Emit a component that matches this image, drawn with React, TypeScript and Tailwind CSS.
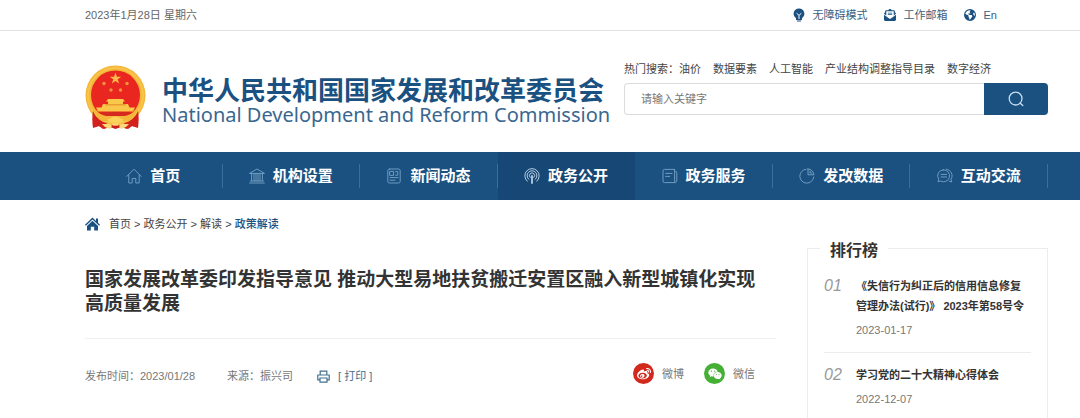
import type { ReactNode } from "react";
import clsx from "clsx";
import { FaEarthAmericas, FaEnvelopeOpenText, FaWeibo, FaWeixin } from "react-icons/fa6";

const hotWords = ["油价", "数据要素", "人工智能", "产业结构调整指导目录", "数字经济"];

const ranking = [
  { no: "01", title: "《失信行为纠正后的信用信息修复管理办法(试行)》 2023年第58号令", date: "2023-01-17" },
  { no: "02", title: "学习党的二十大精神心得体会", date: "2022-12-07" },
];

function LineIcon({ children }: { children: ReactNode }) {
  return (
    <svg viewBox="0 0 16 16" className="h-4 w-4 shrink-0" fill="none" stroke="currentColor" strokeWidth="1" strokeLinecap="round" strokeLinejoin="round" aria-hidden="true">
      {children}
    </svg>
  );
}

const navItems = [
  {
    label: "首页",
    icon: <path d="M.8 8.4 8 1.2l7.2 7.2M2.8 7v8h3.4v-4.6h3.6V15h3.4V7" />,
  },
  {
    label: "机构设置",
    icon: <path d="M.8 5.2 8 1l7.2 4.2zM2.6 5.4v7.4M5 5.4v7.4M7 5.4v7.4M9 5.4v7.4M11 5.4v7.4M13.4 5.4v7.4M1.6 13h12.8M.6 15h14.8" />,
  },
  {
    label: "新闻动态",
    icon: (
      <>
        <rect x="1.8" y="1" width="12.4" height="14" rx="1.6" />
        <rect x="4" y="3.4" width="3.6" height="4" />
        <path d="M9.6 3.6h2.2v3.6H9.6M4 9.6h8M4 12.2h5" />
      </>
    ),
  },
  {
    label: "政务公开",
    active: true,
    icon: (
      <>
        <path d="M3.2 13.2a7.2 7.2 0 1 1 9.6 0M4.6 11.2a4.9 4.9 0 1 1 6.8 0M6.2 9.4a2.6 2.6 0 1 1 3.6 0" />
        <path d="M8 8v7" strokeWidth="1.8" />
      </>
    ),
  },
  {
    label: "政务服务",
    icon: (
      <>
        <path d="M12.6 1.4H2.4A1.4 1.4 0 0 0 1 2.8v10.4a1.4 1.4 0 0 0 1.4 1.4h10.8M12.6 1.4v11.8M12.6 3.4h.9a1.3 1.3 0 0 1 1.3 1.3v8.5a1.4 1.4 0 0 1-2.2.8" />
        <path d="M3.6 5.4h6.4M3.6 8.4h4" />
      </>
    ),
  },
  {
    label: "发改数据",
    icon: (
      <>
        <path d="M7 1.2a7 7 0 1 0 7.8 7.8" />
        <path d="M9 .9v5.9h6A6.4 6.4 0 0 0 9 .9z" />
        <path d="M11 3v2h2" />
      </>
    ),
  },
  {
    label: "互动交流",
    icon: (
      <>
        <path d="M6.6 1.8a6 6 0 1 1-3 11.2L1 13.8l.7-2.6a6 6 0 0 1 4.9-9.4z" />
        <path d="M4 6.4h5.6M4 9h5.6M9.4 1.2a6.4 6.4 0 0 1 4.6 10l.8 2.8-2.6-.8" />
      </>
    ),
  },
];

function Emblem() {
  return (
    <svg viewBox="0 0 61 65" className="h-[65px] w-[61px] shrink-0" role="img" aria-label="国徽">
      <path d="M8 48h45v14l-6-1-5 3-6-2-5.500 2-5.500-2-6 2-5-3-6 1z" fill="#c91f1c" />
      <circle cx="30.500" cy="30.500" r="30" fill="#f4b73a" />
      <circle cx="30.500" cy="30.500" r="27.500" fill="none" stroke="#f8c44a" strokeWidth="2" />
      <circle cx="30.500" cy="30" r="24.500" fill="#e9261f" />
      <path d="m30.500 7.500 1.400 4.200h4.400l-3.600 2.600 1.400 4.200-3.600-2.600-3.600 2.600 1.400-4.200-3.600-2.600h4.400z" fill="#fcb94b" />
      <g fill="#f8903c">
        <circle cx="19" cy="18.500" r="1.700" />
        <circle cx="42" cy="18.500" r="1.700" />
        <circle cx="26" cy="25" r="1.700" />
        <circle cx="35.500" cy="25" r="1.700" />
      </g>
      <path d="M23 34h15l2 2.500h-2V39h5l1.500 3.500H50l-2 4H13l-2-4h5.500L18 39h5v-2.500h-2z" fill="#f9c749" />
      <path d="M20 39.800h21" stroke="#e58a2b" strokeWidth="1" />
      <path d="M10 47c5 1 8 4 12 4 3 0 5-2 8.500-2s5.500 2 8.500 2c4 0 7-3 12-4l-5 9H15z" fill="#f4b73a" />
      <path d="M14 48.500c5 .5 7 2.500 10 2.500h13c3 0 5-2 10-2.500l-4-1.500H18z" fill="#d42a20" />
      <path d="M8 46c-1 6-.8 11 0 17l6-2 4 3 4-6c-6-1-11-5-14-12zM53 46c1 6 .8 11 0 17l-6-2-4 3-4-6c6-1 11-5 14-12z" fill="#d3221d" />
      <path d="M22 54.500c4 0 4-3 8.500-3s4.500 3 8.500 3l-3 3H25z" fill="#fbd45c" />
      <path d="M17 59h8l2 2-2 3-5-2zM44 59h-8l-2 2 2 3 5-2zM27 58.500h7l-1 2h-5z" fill="#fbd97c" />
    </svg>
  );
}

function TopBar() {
  return (
    <div className="border-b border-[#dfe3e6]">
      <div className="flex h-[30px] items-center justify-between pr-[83px] pl-[85px] text-[#666]">
        <time dateTime="2023-01-28">2023年1月28日 星期六</time>
        <div className="flex items-center gap-4 text-[#3c5f80]">
          <a href="#accessible" className="flex items-center gap-2">
            <svg viewBox="0 0 12 14" className="h-3.5 w-3 text-[#1b5180]" aria-hidden="true">
              <path d="M6 .5a5.300 5.300 0 0 0-3 9.700V12h6v-1.800A5.300 5.300 0 0 0 6 .5zM4 12.600h4v.9H4z" fill="currentColor" />
              <path d="M3.600 5.200 6 7.400l2.400-2.200M6 7.400V11" fill="none" stroke="#fff" strokeWidth="1" />
            </svg>
            无障碍模式
          </a>
          <a href="#mail" className="flex items-center gap-2">
            <FaEnvelopeOpenText className="h-3 w-3 text-[#1b5180]" />
            工作邮箱
          </a>
          <a href="#en" className="flex items-center gap-2">
            <FaEarthAmericas className="h-3 w-3 text-[#1b5180]" />
            En
          </a>
        </div>
      </div>
    </div>
  );
}

function Header() {
  return (
    <header className="flex items-start justify-between pt-[30px] pr-8 pb-[22px] pl-[85px]">
      <a href="#home" className="flex gap-4 pt-1 whitespace-nowrap text-[#1b5180]">
        <Emblem />
        <span className="flex flex-col pt-3">
          <span className="text-[26px] leading-7 font-bold">中华人民共和国国家发展和改革委员会</span>
          <span className="font-['Noto_Sans'] text-[20px] leading-5 text-[#3a678f]">National Development and Reform Commission</span>
        </span>
      </a>
      <div className="flex w-[424px] flex-col gap-1.5">
        <div className="flex gap-3 leading-4 text-[#444]">
          <p className="flex">
            热门搜索：<a href="#hot">{hotWords[0]}</a>
          </p>
          {hotWords.slice(1).map((word) => (
            <a key={word} href="#hot">{word}</a>
          ))}
        </div>
        <form className="flex h-8" role="search">
          <input
            type="text"
            aria-label="搜索"
            placeholder="请输入关键字"
            className="min-w-0 flex-1 rounded-l border border-r-0 border-[#dcdcdc] px-4 placeholder:text-[#777]"
          />
          <button type="button" aria-label="搜索" className="flex w-16 items-center justify-center rounded-r bg-[#1b5180] text-[#c6e0f2]">
            <LineIcon>
              <circle cx="7.600" cy="7.600" r="6.400" strokeWidth="1.300" />
              <path d="m12.200 12.200 2.600 2.400" strokeWidth="1.300" />
            </LineIcon>
          </button>
        </form>
      </div>
    </header>
  );
}

function MainNav() {
  return (
    <nav className="bg-[#1b5180] pr-8 pl-[85px]">
      <ul className="flex h-12">
        {navItems.map((item) => (
          <li key={item.label} className={clsx("flex flex-1 items-center", item.active && "bg-[#174775]")}>
            <a href="#nav" className="flex flex-1 items-center justify-center gap-2 text-[15px] leading-6 font-bold text-white">
              <span className={item.active ? "text-[#b5cfe4]" : "text-[#6f9cc0]"}>
                <LineIcon>{item.icon}</LineIcon>
              </span>
              {item.label}
            </a>
            <span className={clsx("h-6 w-px", !item.active && "bg-[#3a6f9b]")} />
          </li>
        ))}
      </ul>
    </nav>
  );
}

function Breadcrumb() {
  return (
    <div className="flex h-12 items-center gap-[9px] pl-[85px] text-[#444]">
      <svg viewBox="0 0 15 14" className="h-3.5 w-[15px] text-[#1b5180]" fill="currentColor" aria-hidden="true">
        <path d="M7.500.6 11 3.900V1.500h2v4.300L15 7.700l-.9 1L7.500 2.500.9 8.700l-.9-1z" />
        <path d="m7.500 3.800 5.500 5.100v4.600H9.200V9.800H5.800v3.700H2V8.900z" />
      </svg>
      <p>
        <a href="#home">首页</a> &gt; <a href="#open">政务公开</a> &gt; <a href="#read">解读</a> &gt;{" "}
        <a href="#policy" className="font-medium text-[#1b5180]">政策解读</a>
      </p>
    </div>
  );
}

function Article() {
  return (
    <article className="min-w-0 flex-1">
      <h1 className="border-b border-[#f0f0f0] pt-5 pr-3 pb-[22px] text-[19px] leading-6 font-bold text-[#333]">
        国家发展改革委印发指导意见 推动大型易地扶贫搬迁安置区融入新型城镇化实现高质量发展
      </h1>
      <div className="mt-6 flex items-end pr-[21px] leading-4 text-[#777]">
        <p>发布时间：2023/01/28</p>
        <p className="ml-8">来源：振兴司</p>
        <button type="button" className="ml-6 flex items-center gap-2 text-[#41718f]">
          <svg viewBox="0 0 13 13" className="h-[13px] w-[13px]" fill="none" stroke="currentColor" strokeWidth="1.200" aria-hidden="true">
            <path d="M3.200 5V1.200h6.600V5M3 9.800H.8V5h11.400v4.800H10" />
            <path d="M3 8h7v4.200H3z" />
          </svg>
          [ 打印 ]
        </button>
        <div className="ml-auto flex gap-5">
          <a href="#weibo" className="flex items-center gap-2">
            <span className="flex h-[21px] w-[21px] items-center justify-center rounded-full bg-[#d3291c] text-white">
              <FaWeibo className="h-3.5 w-3.5" />
            </span>
            微博
          </a>
          <a href="#wechat" className="flex items-center gap-2">
            <span className="flex h-[21px] w-[21px] items-center justify-center rounded-full bg-[#45b035] text-white">
              <FaWeixin className="h-3.5 w-3.5" />
            </span>
            微信
          </a>
        </div>
      </div>
    </article>
  );
}

function Ranking() {
  return (
    <aside className="w-[241px] shrink-0 border border-b-0 border-[#ececec]">
      <h2 className="-mt-2 ml-3 w-fit bg-white px-2.5 text-[16px] leading-5 font-bold text-[#333]">排行榜</h2>
      <ol className="mx-4 divide-y divide-[#ececec] pt-[3px]">
        {ranking.map((item) => (
          <li key={item.no} className="flex py-3 leading-5">
            <span className="w-8 shrink-0 text-[16px] text-[#999] italic">{item.no}</span>
            <div>
              <a href="#rank" className="font-bold text-[#333]">{item.title}</a>
              <p className="mt-1 text-[#777]">{item.date}</p>
            </div>
          </li>
        ))}
      </ol>
    </aside>
  );
}

export default function App() {
  return (
    <div lang="zh-CN" className="flex min-h-screen flex-col bg-white font-['Liberation_Sans','Noto_Sans_CJK_SC',sans-serif] text-[11px]">
      <TopBar />
      <Header />
      <MainNav />
      <Breadcrumb />
      <main className="flex flex-1 gap-[31px] pr-8 pl-[85px]">
        <Article />
        <Ranking />
      </main>
    </div>
  );
}
